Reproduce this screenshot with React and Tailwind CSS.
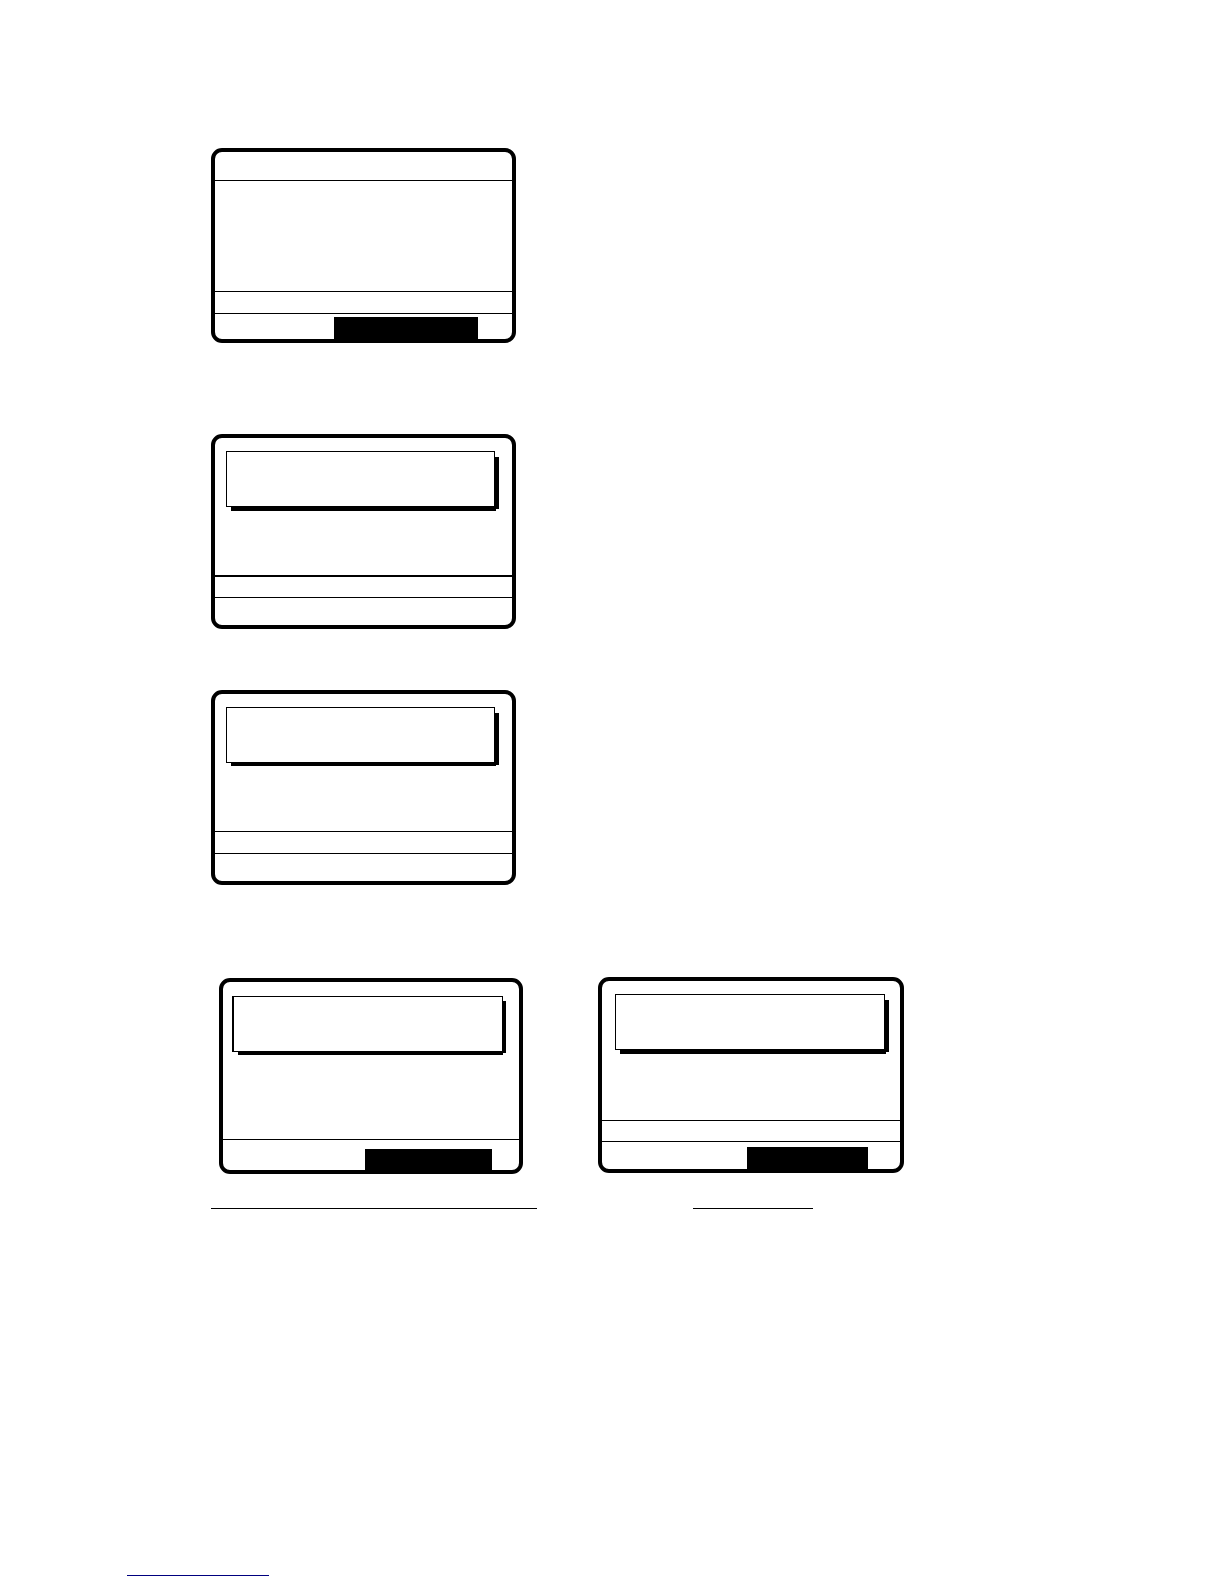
// Hard drop shadow made of two bars, with a small notch in the lower right corner
const SHADOW = {
  deep: 'shadow-[6px_4px_0_-2px_#000,3px_6px_0_-2px_#000]',
  short: 'shadow-[6px_4px_0_-2px_#000,3px_5px_0_-2px_#000]',
  slim: 'shadow-[5px_3px_0_-2px_#000,3px_6px_0_-3px_#000]',
}

function Screen({ className = '', children }) {
  return (
    <section className={`flex w-full flex-col rounded-[11px] border-4 border-black ${className}`}>
      {children}
    </section>
  )
}

function Dialog({ className = '', shadow = 'deep' }) {
  return <div className={`h-14 border border-black bg-white ${SHADOW[shadow]} ${className}`} />
}

function Body({ children }) {
  return <div className="min-h-0 flex-1">{children}</div>
}

function StatusBar({ className = 'h-[22px] border-t' }) {
  return <div className={`border-black ${className}`} />
}

function Footer({ className = 'h-7', children }) {
  return <div className={`flex justify-end border-t border-black ${className}`}>{children}</div>
}

export default function App() {
  return (
    <div className="flex min-h-screen flex-col bg-white pt-[148px] pb-2 pl-[127px]">
      <main className="flex flex-col pl-[84px]">
        <Screen className="h-[195px] max-w-[305px]">
          <div className="h-[29px] border-b border-black" />
          <Body />
          <StatusBar />
          <Footer className="h-[26px] pt-[3px] pr-[34px]">
            <div className="w-36 bg-black" />
          </Footer>
        </Screen>

        <Screen className="mt-[91px] h-[195px] max-w-[305px]">
          <Body>
            <Dialog className="mt-[13px] mr-[17px] ml-[11px]" />
          </Body>
          <StatusBar className="h-[22px] border-t-2" />
          <Footer />
        </Screen>

        <Screen className="mt-[61px] h-[195px] max-w-[305px]">
          <Body>
            <Dialog shadow="short" className="mt-[13px] mr-[17px] ml-[11px]" />
          </Body>
          <StatusBar />
          <Footer />
        </Screen>

        <div className="mt-[92px] flex flex-wrap gap-x-[61px] gap-y-16">
          <div className="flex w-full max-w-[326px] flex-col justify-between gap-[34px] pt-px">
            <Screen className="ml-2 h-[196px] max-w-[304px]">
              <Body>
                <Dialog shadow="slim" className="mt-[14px] mr-4 ml-[9px] border-l-2" />
              </Body>
              <Footer className="h-[31px] pt-[9px] pr-[27px]">
                <div className="w-[127px] bg-black" />
              </Footer>
            </Screen>
            <hr className="border-t border-black" />
          </div>

          <div className="flex w-full max-w-[306px] flex-col justify-between gap-[34px]">
            <Screen className="h-[196px]">
              <Body>
                <Dialog className="mt-[13px] mr-[15px] ml-[13px]" />
              </Body>
              <StatusBar className="h-[21px] border-t" />
              <Footer className="h-7 pt-[5px] pr-8">
                <div className="w-[121px] bg-black" />
              </Footer>
            </Screen>
            <hr className="ml-[95px] w-[120px] border-t border-black" />
          </div>
        </div>
      </main>

      <footer className="mt-auto">
        <hr className="w-[142px] border-t border-[#00007f]" />
      </footer>
    </div>
  )
}
